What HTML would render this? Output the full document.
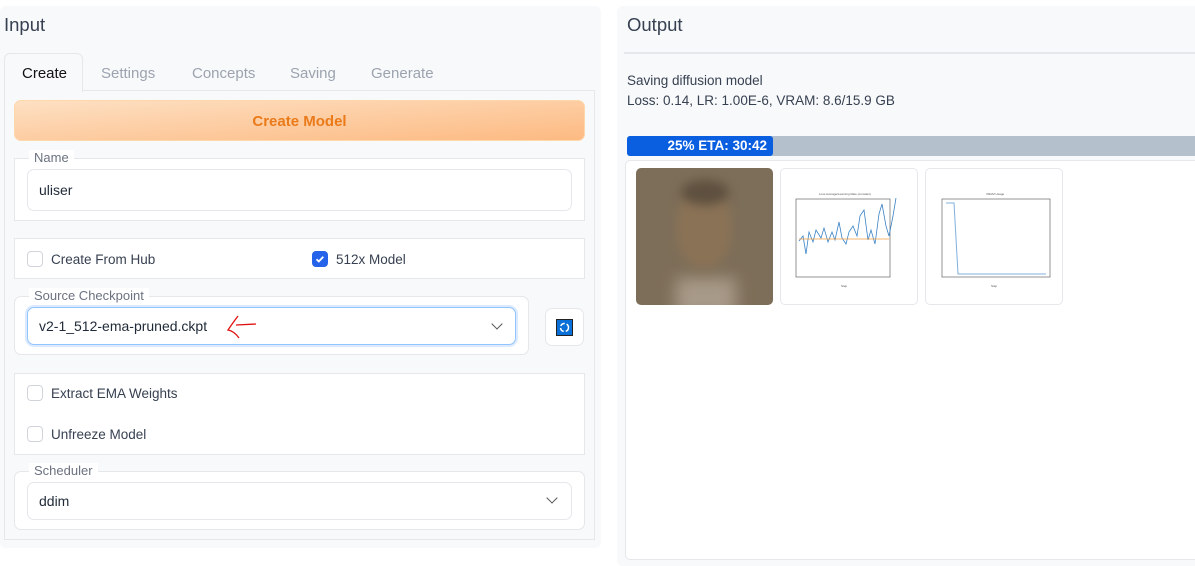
<!DOCTYPE html>
<html><head><style>
*{box-sizing:border-box;margin:0;padding:0}
body{width:1195px;height:559px;background:#fff;font-family:"Liberation Sans",sans-serif;position:relative;overflow:hidden;color:#1f2937}
.a{position:absolute}
.box{position:absolute;background:#fff;border:1px solid #e5e7eb;border-radius:7px}
.lbl{position:absolute;font-size:13px;color:#6b7280;background:#fff;padding:0 5px}
.inp{position:absolute;background:#fff;border:1px solid #e5e7eb;border-radius:7px;font-size:14px;color:#1f2937;padding-left:11px;display:flex;align-items:center}
.cb{position:absolute;width:16px;height:16px;border:1px solid #d1d5db;border-radius:4px;background:#fff}
.t{position:absolute;font-size:13.5px;color:#374151}
.chev{position:absolute;width:8px;height:8px;border-right:1.5px solid #555;border-bottom:1.5px solid #555;transform:rotate(45deg)}
</style></head><body>
<div class="a" style="left:0;top:6px;width:601px;height:542px;background:#f8f9fb;border-radius:6px"></div>
<div class="a" style="left:4px;top:14px;font-size:18.5px;color:#374151">Input</div>
<div class="a" style="left:4px;top:90px;width:591px;height:450px;border:1px solid #e5e7eb;background:#f8f9fb"></div>
<div class="a" style="left:4px;top:53px;width:79px;height:39px;background:#f8f9fb;border:1px solid #e5e7eb;border-bottom:none;border-radius:6px 6px 0 0"></div>
<div class="a" style="left:22px;top:65px;font-size:15px;color:#111">Create</div>
<div class="a" style="left:101px;top:65px;font-size:15px;color:#9ca3af">Settings</div>
<div class="a" style="left:192px;top:65px;font-size:15px;color:#9ca3af">Concepts</div>
<div class="a" style="left:290px;top:65px;font-size:15px;color:#9ca3af">Saving</div>
<div class="a" style="left:371px;top:65px;font-size:15px;color:#9ca3af">Generate</div>
<div class="a" style="left:14px;top:100px;width:571px;height:41px;border-radius:7px;background:linear-gradient(to bottom right,#fde0c3,#fdba82);border:1px solid #fed7aa;display:flex;align-items:center;justify-content:center;color:#ea7a1a;font-size:15px;font-weight:bold;padding-top:2px">Create Model</div>
<div class="box" style="left:14px;top:158px;width:571px;height:63px;border-radius:0"></div>
<div class="lbl" style="left:29px;top:150px">Name</div>
<div class="inp" style="left:27px;top:169px;width:545px;height:42px">uliser</div>
<div class="box" style="left:14px;top:238px;width:571px;height:41px;border-radius:0"></div>
<div class="cb" style="left:27px;top:251px"></div><div class="t" style="left:51px;top:252px">Create From Hub</div>
<div class="cb" style="left:312px;top:251px;background:#2563eb;border-color:#2563eb"><svg width="14" height="14" viewBox="0 0 14 14" style="position:absolute;left:0;top:0"><path d="M3.5 7.2l2.3 2.3 4.5-4.8" fill="none" stroke="#fff" stroke-width="1.8"/></svg></div>
<div class="t" style="left:336px;top:252px">512x Model</div>
<div class="box" style="left:14px;top:296px;width:515px;height:59px"></div>
<div class="lbl" style="left:29px;top:288px">Source Checkpoint</div>
<div class="inp" style="left:27px;top:307px;width:489px;height:38px;border-color:#93c5fd;box-shadow:0 0 0 2px #dbeafe">v2-1_512-ema-pruned.ckpt</div>
<svg class="a" style="left:222px;top:312px" width="40" height="30"><path d="M34 12 L14 13 M16 4 Q10 12 6 18 Q12 19 17 26" fill="none" stroke="#e01010" stroke-width="1.3"/></svg>
<div class="chev" style="left:493px;top:320px"></div>
<div class="box" style="left:545px;top:308px;width:39px;height:38px"></div>
<div class="a" style="left:556px;top:319px;width:17px;height:17px;background:#0a6fd6;border:1px solid #222"><svg width="15" height="15" viewBox="0 0 15 15"><circle cx="7.5" cy="7.5" r="4" fill="none" stroke="#fff" stroke-width="1.5" stroke-dasharray="5 2"/></svg></div>
<div class="box" style="left:14px;top:373px;width:571px;height:82px;border-radius:0"></div>
<div class="cb" style="left:27px;top:385px"></div><div class="t" style="left:51px;top:386px">Extract EMA Weights</div>
<div class="cb" style="left:27px;top:426px"></div><div class="t" style="left:51px;top:427px">Unfreeze Model</div>
<div class="box" style="left:14px;top:471px;width:571px;height:59px"></div>
<div class="lbl" style="left:29px;top:463px">Scheduler</div>
<div class="inp" style="left:27px;top:482px;width:545px;height:38px">ddim</div>
<div class="chev" style="left:548px;top:494px"></div>

<div class="a" style="left:617px;top:6px;width:600px;height:560px;background:#f8f9fb;border-radius:6px"></div>
<div class="a" style="left:627px;top:14px;font-size:18.5px;color:#374151">Output</div>
<div class="a" style="left:624px;top:52px;width:580px;height:2px;background:#e5e7eb"></div>
<div class="a" style="left:627px;top:73px;font-size:13.5px;color:#374151">Saving diffusion model</div>
<div class="a" style="left:627px;top:93px;font-size:13.5px;color:#374151">Loss: 0.14, LR: 1.00E-6, VRAM: 8.6/15.9 GB</div>
<div class="a" style="left:627px;top:136px;width:580px;height:20px;background:#b4c0cc;border-radius:3px 0 0 3px"></div>
<div class="a" style="left:627px;top:136px;width:146px;height:20px;background:#0a5fe0;border-radius:3px;color:#fff;font-weight:bold;font-size:13.5px;text-align:right;padding-right:6px;line-height:20px">25% ETA: 30:42</div>
<div class="a" style="left:625px;top:160px;width:580px;height:400px;background:#fff;border:1px solid #e5e7eb;border-radius:5px"></div>
<div class="a" style="left:636px;top:168px;width:137px;height:137px;border-radius:5px;background:#7d6e59;overflow:hidden">
<div class="a" style="left:40px;top:110px;width:60px;height:40px;background:#a89a88;filter:blur(8px)"></div>
<div class="a" style="left:40px;top:20px;width:56px;height:80px;border-radius:45%;background:#8a7256;filter:blur(5px)"></div>
<div class="a" style="left:45px;top:12px;width:48px;height:25px;border-radius:50%;background:#5e503f;filter:blur(5px)"></div>
</div>
<div class="a" style="left:780px;top:168px;width:138px;height:137px;border:1px solid #e5e7eb;border-radius:5px;background:#fff">
<svg width="138" height="137" font-size="3" fill="#555"><text x="38" y="26">Loss Average/Learning Rate (constant)</text><rect x="15" y="30" width="94" height="78" fill="none" stroke="#666" stroke-width=".7"/><path d="M18 72 l4 -5 3 18 3 -22 4 10 3 -12 5 8 3 -10 4 14 4 -10 3 8 4 -18 3 16 4 6 3 -12 4 -6 4 10 3 -20 4 -6 4 30 3 -10 4 14 4 -30 3 -10 4 22 3 10 4 -20 3 -18" fill="none" stroke="#3b82c4" stroke-width=".8"/><path d="M18 70 H108" stroke="#f59e42" stroke-width=".7"/><text x="60" y="118">Step</text></svg></div>
<div class="a" style="left:925px;top:168px;width:138px;height:137px;border:1px solid #e5e7eb;border-radius:5px;background:#fff">
<svg width="138" height="137" font-size="3" fill="#555"><text x="60" y="26">VRAM Usage</text><rect x="16" y="30" width="108" height="78" fill="none" stroke="#666" stroke-width=".7"/><path d="M20 34 H28 L32 105 H120" fill="none" stroke="#7fb0de" stroke-width="1"/><text x="65" y="118">Step</text></svg></div>
</body></html>
